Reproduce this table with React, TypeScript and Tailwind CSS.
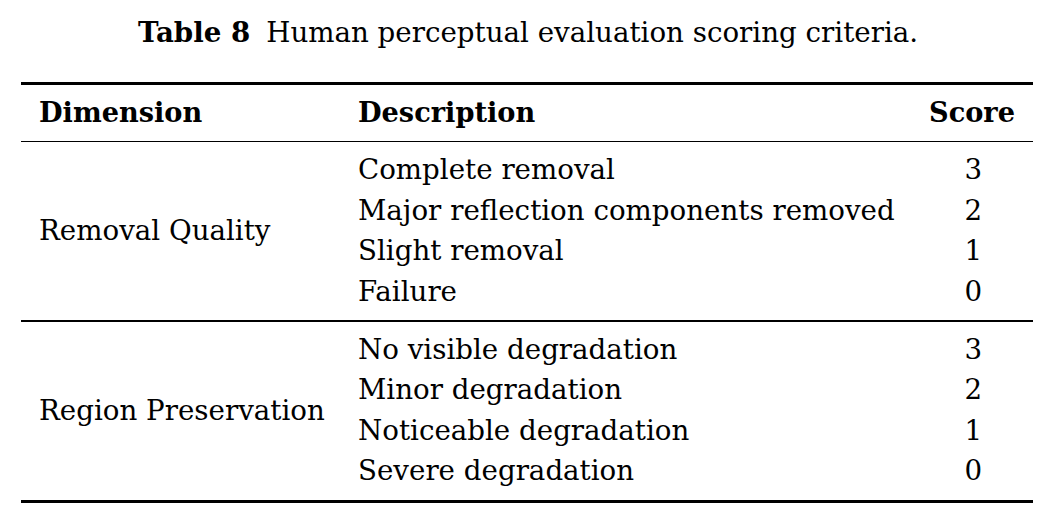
import React from "react";

const groups = [
  {
    name: "Removal Quality",
    rows: [
      ["Complete removal", "3"],
      ["Major reflection components removed", "2"],
      ["Slight removal", "1"],
      ["Failure", "0"],
    ],
  },
  {
    name: "Region Preservation",
    rows: [
      ["No visible degradation", "3"],
      ["Minor degradation", "2"],
      ["Noticeable degradation", "1"],
      ["Severe degradation", "0"],
    ],
  },
];

export default function App() {
  return (
    <div
      className="w-[1056px] h-[521px] bg-white text-black overflow-hidden"
      style={{ fontFamily: '"DejaVu Serif", "Liberation Serif", serif' }}
    >
      <div className="h-[82px] pt-[14px] text-center text-[27.7px] leading-[38px]">
        <span className="font-bold">Table 8</span>
        <span className="ml-[16px]">Human perceptual evaluation scoring criteria.</span>
      </div>
      <div className="mx-[21px] w-[1012px]">
        <div className="h-[2.5px] bg-black" />
        <div className="grid grid-cols-[319px_1fr_100px] h-[56px] items-center text-[27.2px] font-bold px-[18px]">
          <div>Dimension</div>
          <div>Description</div>
          <div className="text-right">Score</div>
        </div>
        <div className="h-[1.5px] bg-black" />
        {groups.map((g, gi) => (
          <div key={g.name}>
            <div className="grid grid-cols-[319px_1fr_100px] py-[8px] px-[18px] text-[27.7px]">
              <div className="flex items-center">{g.name}</div>
              <div className="flex flex-col">
                {g.rows.map((r) => (
                  <div key={r[0]} className="h-[40.5px] flex items-center">
                    {r[0]}
                  </div>
                ))}
              </div>
              <div className="flex flex-col">
                {g.rows.map((r) => (
                  <div key={r[0]} className="h-[40.5px] flex items-center justify-end pr-[33px]">
                    {r[1]}
                  </div>
                ))}
              </div>
            </div>
            {gi === 0 ? (
              <div className="h-[1.5px] bg-black" />
            ) : (
              <div className="h-[3px] bg-black" />
            )}
          </div>
        ))}
      </div>
    </div>
  );
}
